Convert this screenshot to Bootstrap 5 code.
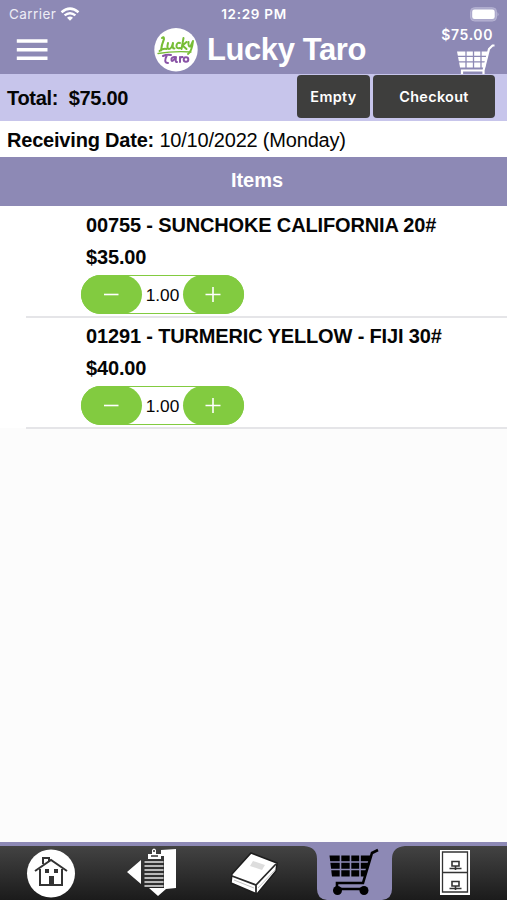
<!DOCTYPE html>
<html lang="en">
<head>
<meta charset="utf-8">
<meta name="viewport" content="width=device-width, initial-scale=1">
<title>Lucky Taro</title>
<link href="https://cdn.jsdelivr.net/npm/bootstrap@5.3.0/dist/css/bootstrap.min.css" rel="stylesheet">
<style>
:root{--plum:#8d89b5;--lilac:#c7c5eb;--leaf:#82cb40}
body{font-family:"Liberation Sans",Arial,sans-serif;background:#fcfcfc;color:#050505;height:900px;overflow:hidden;font-size:20px;line-height:24px}
svg{display:block;flex:none}
.ui-font{font-family:Inter,sans-serif}
.app-top{background:var(--plum);height:74px;color:#fff}
.status-line{height:27px;padding:1px 8px 0 9px;font-size:13.5px;line-height:26px}
.status-line>div{flex:1 1 0}
.carrier{letter-spacing:.42px;color:#eeedf5}
.clock{font-size:13.5px;font-weight:600;letter-spacing:.7px}
.title-line{height:47px;padding:0 11px 0 16px}
.side{width:100px}
.brand{padding-left:8px}
.brand-name{font-size:31px;line-height:46px;font-weight:700;letter-spacing:-.4px;margin-left:9px}
.cart-sum{font-size:14px;line-height:16px;font-weight:600;letter-spacing:.6px;margin:0 3px 1px 0}
.total-line{height:47px;background:var(--lilac);padding:0 12px 2px 7px}
.total-text{white-space:pre;padding-top:2px;letter-spacing:-.3px}
.dark-btn,.dark-btn:hover{--bs-btn-padding-x:0;--bs-btn-padding-y:0;height:43px;background:#3e3e3d;color:#fff;border:0;border-radius:4px;font-size:14.4px;font-weight:600;letter-spacing:.35px}
.w-empty{width:73px}.w-check{width:122px}
.date-line{height:36px;background:#fff;padding:7px 7px 0;letter-spacing:-.2px}
.items-head{height:49px;background:var(--plum);color:#fff;font-size:20px;line-height:24px;padding:11px 0 0 7px}
.item-line{height:111px;background:#fff;padding:7px 0 0 81px}
.item-line .label{padding-left:5px;height:32px;white-space:nowrap;letter-spacing:-.15px}
.rule{height:2px;margin-left:26px;background:#e5e5e8;margin-top:-1px;margin-bottom:-1px;position:relative}
.stepper{width:163px;height:39px;border:1px solid var(--leaf);border-radius:20px;margin-top:-2px;font-size:17.3px}
.step-btn{width:61px;height:39px;margin:-1px;background:var(--leaf);border-radius:20px;border:0;padding:0;flex:none}
.tabs-bar{height:58px;background:linear-gradient(#434343,#1b1b1b);border-top:4px solid var(--plum)}
.tab-cell{flex:1 1 0;height:54px;display:flex;justify-content:center;color:#fff}
</style>
<script src="https://cdn.jsdelivr.net/npm/bootstrap@5.3.0/dist/js/bootstrap.bundle.min.js"></script>
</head>
<body class="d-flex flex-column">
<header class="app-top">
  <div class="status-line d-flex align-items-center ui-font">
    <div class="d-flex align-items-center"><span class="carrier">Carrier</span>
      <svg class="ms-1" width="20" height="15" viewBox="0 0 20 15" fill="none" stroke="#fff" stroke-width="2.5"><path d="M1.500 5.200Q10-2 18.500 5.200M4.600 8.400Q10 4 15.400 8.400"/><path d="M7 10.700Q10 8.400 13 10.700L10 13.800Z" fill="#fff" stroke="none"/></svg>
    </div>
    <span class="clock">12:29 PM</span>
    <div class="d-flex justify-content-end">
      <svg width="29" height="15" viewBox="0 0 29 15"><rect x=".5" y=".7" width="26" height="13.300" rx="4" fill="#aba8cb" stroke="#b6b3d3"/><rect x="2.200" y="2.500" width="22.500" height="9.500" rx="2.300" fill="#fff"/><path d="M27.500 5q2 2.300 0 4.600z" fill="#b6b3d3"/></svg>
    </div>
  </div>
  <div class="title-line d-flex justify-content-between">
    <div class="side pt-2">
      <svg class="mt-1" width="32" height="22" viewBox="0 0 32 22" stroke="#fff" stroke-width="3.600"><path d="M.8 2H31.500M.8 10.700H31.500M.8 19.200H31.500"/></svg>
    </div>
    <div class="brand d-flex">
      <svg width="44" height="45" viewBox="0 0 44 45"><circle cx="22" cy="22.700" r="21.700" fill="#fff"/>
        <g fill="none" stroke-linecap="round" stroke-linejoin="round"><g stroke="#77bd36" stroke-width="2"><path d="M8 11q2-2 2 1Q7.500 18 7 23.500M5.500 24q4-3 7-2M14 16q-1.500 6 1 6t4-6q-1 6 1.500 5.500M26 16q-3-.8-3.500 2.500T26 21M29.500 11l-2 11M32.500 15l-4 3.500 4 3.500M34.500 15q-.5 5 2 4.500L39 14q-1 10-5 13"/><path d="M4 26.500Q19 24 37 25" stroke-width="1.300"/></g>
        <g stroke="#8953a6" stroke-width="2"><path d="M9 29q4-2 8-1M13 28q-4 8 1 8M21 30q-4 0-3.500 3t4.500-3q-1 5.500 1 5M26 30v5M26 31.500q1-2 2.500-1.500"/><circle cx="32" cy="32.500" r="2.300"/></g></g></svg>
      <span class="brand-name">Lucky Taro</span>
    </div>
    <div class="side d-flex flex-column align-items-end ui-font">
      <span class="cart-sum">$75.00</span>
      <svg width="40" height="30" viewBox="0 0 40 30"><path d="M1 7.500h31l-3 16H4z" fill="#fff"/><g fill="none" stroke="#8d89b5" stroke-width="1.300"><path d="M0 12.300h32M0 17.800h32M10 7v17M17.500 7v17M25 7v17"/></g><path d="M38.500 1.500h-2l-3.500 3.500-5.500 21.500H6v4M27.500 26v4" fill="none" stroke="#fff" stroke-width="2.200"/></svg>
    </div>
  </div>
</header>
<section class="total-line d-flex align-items-center justify-content-between">
  <b class="total-text">Total:  $75.00</b>
  <div class="d-flex ui-font" style="gap:3px"><button class="btn dark-btn w-empty">Empty</button><button class="btn dark-btn w-check">Checkout</button></div>
</section>
<section class="date-line"><b>Receiving Date:</b> 10/10/2022 (Monday)</section>
<h1 class="items-head m-0 text-center fw-bold">Items</h1>
<main class="flex-grow-1">
  <article class="item-line">
    <div class="label fw-bold">00755 - SUNCHOKE CALIFORNIA 20#</div>
    <div class="label fw-bold">$35.00</div>
    <div class="stepper d-flex justify-content-between align-items-center">
      <button class="step-btn" aria-label="Decrease"><svg class="mx-auto" width="16" height="16" stroke="#fff" stroke-width="1.600"><path d="M0 7.500h14.500"/></svg></button><span>1.00</span><button class="step-btn" aria-label="Increase"><svg class="mx-auto" width="16" height="16" stroke="#fff" stroke-width="1.600"><path d="M.5 7.500h15M8 0v15"/></svg></button>
    </div>
  </article>
  <div class="rule"></div>
  <article class="item-line">
    <div class="label fw-bold">01291 - TURMERIC YELLOW - FIJI 30#</div>
    <div class="label fw-bold">$40.00</div>
    <div class="stepper d-flex justify-content-between align-items-center">
      <button class="step-btn" aria-label="Decrease"><svg class="mx-auto" width="16" height="16" stroke="#fff" stroke-width="1.600"><path d="M0 7.500h14.500"/></svg></button><span>1.00</span><button class="step-btn" aria-label="Increase"><svg class="mx-auto" width="16" height="16" stroke="#fff" stroke-width="1.600"><path d="M.5 7.500h15M8 0v15"/></svg></button>
    </div>
  </article>
  <div class="rule"></div>
</main>
<nav class="tabs-bar d-flex">
  <a class="tab-cell" href="#" aria-label="Home"><svg width="50" height="54" viewBox="0 0 50 54"><circle cx="25" cy="27.500" r="24" fill="#fff"/><g fill="none" stroke="#333" stroke-width="2"><path d="M9 25L25 14l16 11M14 23v16h22V23M17 18v-6h6v3"/></g><path d="M23 30h5v9h-5zM19 23h4v4h-4zM28 23h4v4h-4z" fill="#333"/></svg></a>
  <a class="tab-cell" href="#" aria-label="Orders"><svg width="50" height="54" viewBox="0 0 50 54"><path d="M0 26L14 14v24zM34 4l15-1v39l-10 1-8 7-9-8h15V10h-3z" fill="#fff"/><path d="M17 14h20v27H17z" fill="#303030"/><path d="M17.500 16h19M17.500 20h19M17.500 24h19M17.500 28h19M17.500 32h19M17.500 36h19M17.500 40h19" stroke="#e5e5e5" stroke-width="1.700"/><path d="M21 13V8h4V4q2-3 4 0v4h5v5z" fill="#fff"/><path d="M24 10h7M26 5h2" stroke="#333" stroke-width="1.500"/></svg></a>
  <a class="tab-cell" href="#" aria-label="Catalog"><svg width="50" height="54" viewBox="0 0 50 54"><path d="M22 7l26 10-1 8-19 23L2 37l1-9z" fill="#fff" stroke="#1d1d1d" stroke-width="1.500"/><path d="M3 30l24 9 20-21M27 39v8" fill="none" stroke="#292929" stroke-width="1.800"/><path d="M5 34l20 8M29 42l17-18" stroke="#999" stroke-width=".6"/><path d="M24 15l12 4-3 5-12-4z" fill="#ddd"/></svg></a>
  <a class="tab-cell" href="#" aria-label="Cart"><svg width="101" height="54" viewBox="0 0 101 54"><path d="M0 0h101q-13 1-13 13v30q0 10-10 11H23q-10-1-10-11V13Q13 1 0 0z" fill="#8d89b5"/><path d="M25.500 9.500h41l-6 21H28z"/><path d="M25 16h42M25 23.500h42M36.500 8v24M46.500 8v24M56 8v24" stroke="#8d89b5" stroke-width="1.600"/><path d="M74 4l-6 3-9 30H33v6h28" fill="none" stroke="#000" stroke-width="2.600"/><circle cx="33.500" cy="44.500" r="4.500"/><circle cx="60" cy="44.500" r="4.500"/></svg></a>
  <a class="tab-cell" href="#" aria-label="Files"><svg width="50" height="54" viewBox="0 0 50 54"><path d="M9 4h30v45H9z" fill="#fff"/><path d="M11.500 6h25v40h-25zM11 26.500h26" fill="none" stroke="#333" stroke-width="1.300"/><path d="M21 15.500h7v4.500h-7zM18.500 22.500h12M24.500 20v4M21 35.500h7v4.500h-7zM18.500 42.500h12M24.500 40v4" fill="none" stroke="#333" stroke-width="1.600"/></svg></a>
</nav>
</body>
</html>
